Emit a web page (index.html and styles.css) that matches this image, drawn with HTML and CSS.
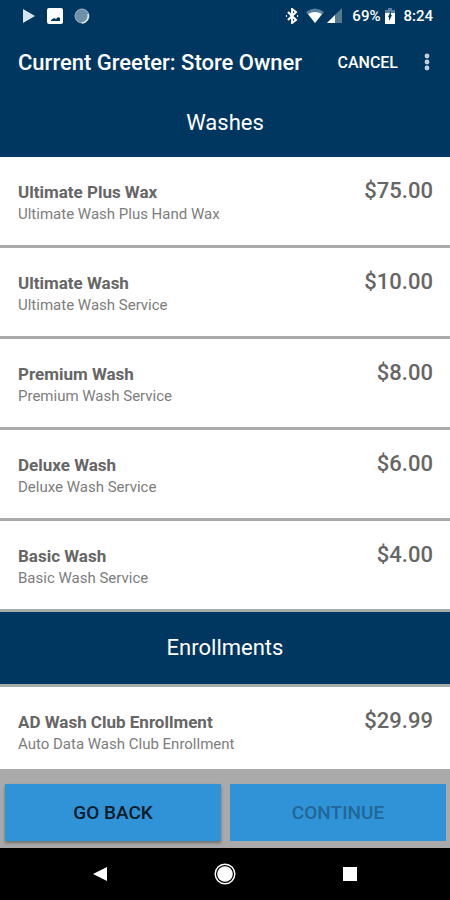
FILE: index.html
```
<!DOCTYPE html>
<html lang="en">
<head>
  <meta charset="UTF-8">
  <meta name="viewport" content="width=device-width, initial-scale=1">
  <title>Greeter - Select Service</title>
  <link rel="stylesheet" href="styles.css">
</head>
<body>
  <div class="status-bar">
    <div class="status-group">
      <svg class="notification" width="16" height="16" viewBox="0 0 16 16"><path d="M3 1v14l12-7z" fill="#d5e2f0"/></svg>
      <svg class="notification" width="16" height="16" viewBox="0 0 16 16"><path fill-rule="evenodd" d="M2 0h12q2 0 2 2v12q0 2-2 2H2q-2 0-2-2V2q0-2 2-2zM4 13h9v-3l-2-1-2 2-2-1-3 2z" fill="#fff"/></svg>
      <svg class="notification" width="16" height="16" viewBox="0 0 16 16"><circle cx="8" cy="8" r="7" fill="#6f91a8" stroke="#9bb2c3" stroke-width="1"/><path d="M14 6a7 7 0 0 1-6 9" fill="none" stroke="#e4edf3" stroke-width="1.5"/></svg>
    </div>
    <div class="status-group status-right">
      <svg class="bluetooth" width="12" height="16" viewBox="0 0 12 16"><path d="M2 4l8 8-4 3V1l4 3-8 8M0 8h1M11 8h1" fill="none" stroke="#fff" stroke-width="2"/></svg>
      <svg class="wifi" width="18" height="16" viewBox="0 0 18 16"><path d="M0 4Q9-3 18 4L9 15z" fill="#58819f"/><path d="M2 6q7-4 14 0l-7 9z" fill="#fff"/></svg>
      <svg class="signal" width="16" height="16" viewBox="0 0 16 16"><path d="M0 15L15 0v15z" fill="#55798f"/><path d="M0 15l8-8v8z" fill="#fff"/></svg>
      <span class="percent">69%</span>
      <svg class="battery" width="10" height="16" viewBox="0 0 10 16"><path d="M0 2h3V0h4v2h3v14H0z" fill="#58819f"/><path d="M0 5h10v11H0z" fill="#fff"/><path d="M6 3L3 9h1v4l3-6H6z" fill="#003760"/></svg>
      <span>8:24</span>
    </div>
  </div>

  <header class="app-bar">
    <h1>Current Greeter: Store Owner</h1>
    <button class="cancel" type="button">CANCEL</button>
    <button class="menu" type="button" aria-label="More options">
      <svg width="6" height="18" viewBox="0 0 6 18" fill="#c2d0dc"><circle cx="3" cy="3" r="2.4"/><circle cx="3" cy="9" r="2.4"/><circle cx="3" cy="15" r="2.4"/></svg>
    </button>
  </header>

  <main class="services">
    <h2 class="washes">Washes</h2>
    <ul>
      <li><h3>Ultimate Plus Wax</h3><span class="price">$75.00</span><p>Ultimate Wash Plus Hand Wax</p></li>
      <li><h3>Ultimate Wash</h3><span class="price">$10.00</span><p>Ultimate Wash Service</p></li>
      <li><h3>Premium Wash</h3><span class="price">$8.00</span><p>Premium Wash Service</p></li>
      <li><h3>Deluxe Wash</h3><span class="price">$6.00</span><p>Deluxe Wash Service</p></li>
      <li><h3>Basic Wash</h3><span class="price">$4.00</span><p>Basic Wash Service</p></li>
    </ul>
    <h2 class="enrollments">Enrollments</h2>
    <ul>
      <li><h3>AD Wash Club Enrollment</h3><span class="price">$29.99</span><p>Auto Data Wash Club Enrollment</p></li>
    </ul>
  </main>

  <footer class="actions">
    <button type="button">GO BACK</button>
    <button type="button" disabled>CONTINUE</button>
  </footer>

  <nav class="system-nav">
    <button type="button" aria-label="Back"><svg width="22" height="22" viewBox="0 0 22 22"><path d="M4 11L18 4v14z" fill="#fff"/></svg></button>
    <button type="button" aria-label="Home"><svg width="22" height="22" viewBox="0 0 22 22"><circle cx="11" cy="11" r="9.8" fill="none" stroke="#fff" stroke-width="1.4"/><circle cx="11" cy="11" r="7.8" fill="#fff"/></svg></button>
    <button type="button" aria-label="Recent apps"><svg width="22" height="22" viewBox="0 0 22 22"><path d="M4 4h14v14H4z" fill="#fff"/></svg></button>
  </nav>
</body>
</html>
```
FILE: styles.css
```
:root {
  --navy: #003760;
  --blue: #3093d8;
  --line: #a9aba9;
  --title: #666;
  --subtitle: #7d7d7d;
}

* {
  box-sizing: border-box;
}

body {
  margin: 0;
  height: 100vh;
  display: flex;
  flex-direction: column;
  background: #fff;
  font-family: Roboto, "Liberation Sans", sans-serif;
}

h1, h2, h3, p, ul {
  margin: 0;
  padding: 0;
}

button {
  border: 0;
  padding: 0;
  background: none;
  font-family: inherit;
  font-weight: 500;
}

svg {
  display: block;
}

/* Status bar */
.status-bar {
  flex: none;
  height: 32px;
  padding: 0 17px 0 20px;
  display: flex;
  align-items: center;
  justify-content: space-between;
  background: var(--navy);
  color: #fff;
  font-size: 15px;
  font-weight: 500;
}

.status-group {
  display: flex;
  align-items: center;
  gap: 11px;
}

.status-right {
  gap: 3px;
}

.bluetooth {
  margin-right: 5px;
}

.signal {
  margin-right: 6px;
}

.battery {
  margin: 0 5px 0 2px;
}

/* App bar */
.app-bar {
  flex: none;
  height: 60px;
  padding: 0 20px 0 18px;
  display: flex;
  align-items: center;
  background: var(--navy);
  color: #fff;
}

.app-bar h1 {
  flex: 1;
  font-size: 22px;
  font-weight: 500;
  white-space: nowrap;
}

.cancel {
  color: #fff;
  font-size: 16px;
}

.menu {
  margin-left: 26px;
}

/* Service list */
.services {
  flex: 1;
  min-height: 0;
  overflow: hidden;
}

.services h2 {
  background: var(--navy);
  color: #fff;
  font-size: 22px;
  font-weight: 400;
  line-height: 28px;
  text-align: center;
}

.services .washes {
  padding: 17px 0 20px;
}

.services .enrollments {
  padding: 22px 0;
  border-bottom: 3px solid var(--line);
}

.services li {
  height: 91px;
  padding: 24px 17px 0 18px;
  display: grid;
  grid-template-columns: 1fr auto;
  align-content: start;
  border-bottom: 3px solid var(--line);
  list-style: none;
}

.services h3 {
  color: var(--title);
  font-size: 17px;
  font-weight: 700;
  line-height: 22px;
}

.price {
  color: var(--title);
  font-size: 22px;
  font-weight: 500;
  line-height: 20px;
}

.services p {
  color: var(--subtitle);
  font-size: 15px;
  line-height: 22px;
}

/* Bottom buttons */
.actions {
  flex: none;
  padding: 15px 4px 7px 5px;
  display: flex;
  gap: 9px;
  background: #aaa;
}

.actions button {
  flex: 1;
  height: 57px;
  background: var(--blue);
  box-shadow: 0 2px 3px rgba(0, 0, 0, 0.35);
  color: #0b1c29;
  font-size: 19px;
}

.actions button:disabled {
  box-shadow: none;
  color: #226797;
}

/* System navigation */
.system-nav {
  flex: none;
  height: 52px;
  padding: 0 38px;
  display: flex;
  align-items: center;
  background: #000;
}

.system-nav button {
  flex: 1;
  display: flex;
  justify-content: center;
}
```
